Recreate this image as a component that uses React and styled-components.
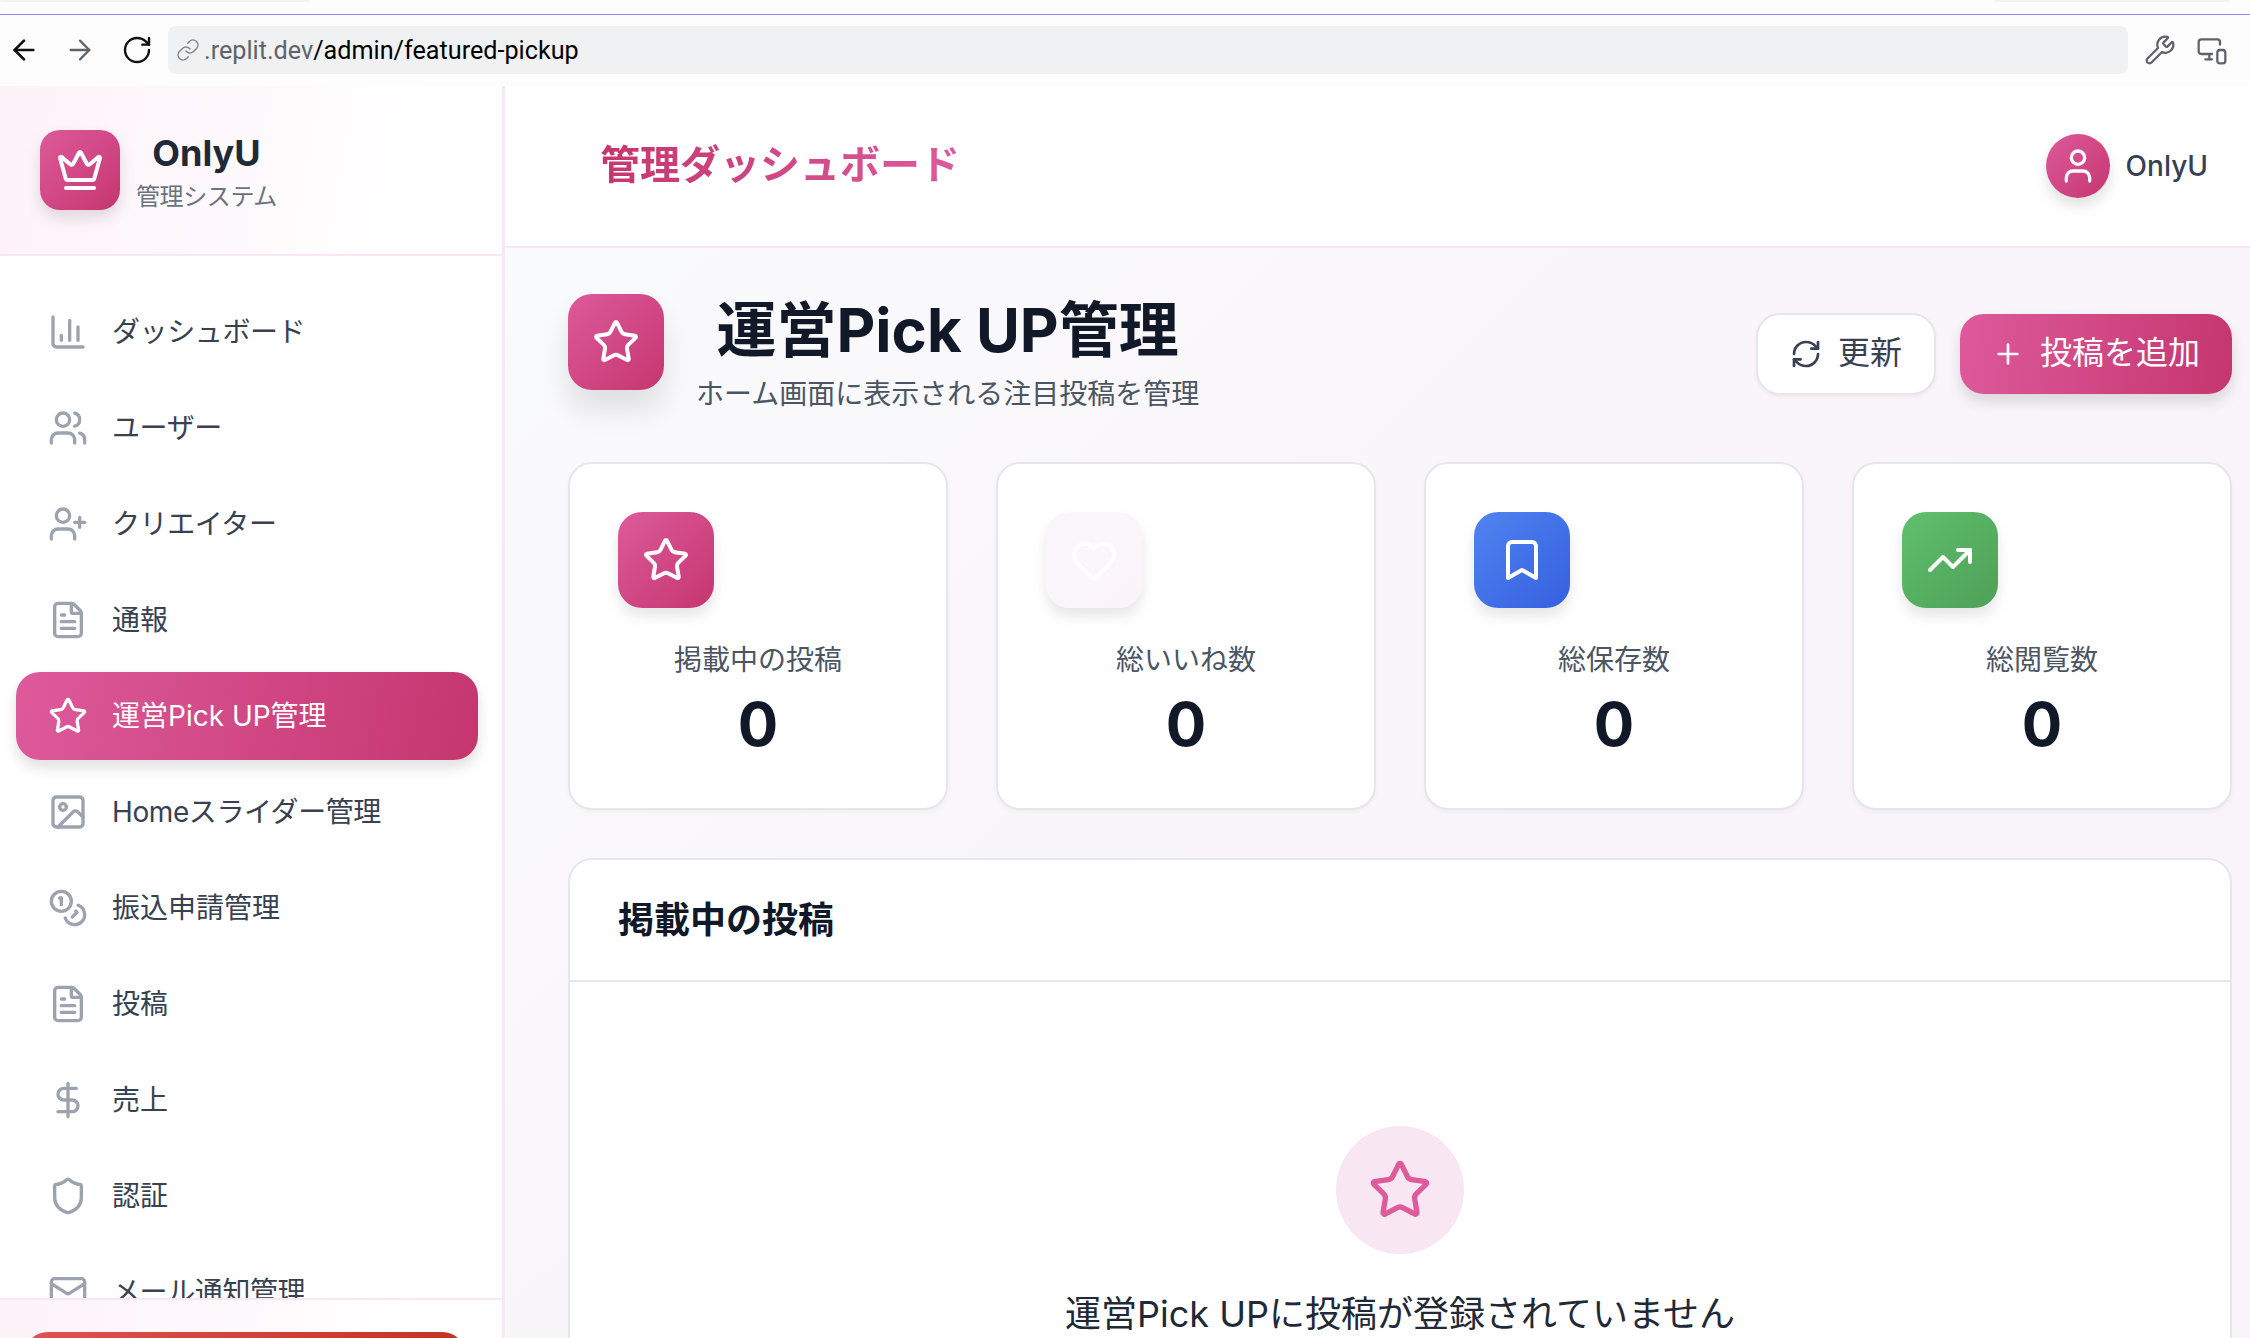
import React from 'react';
import styled, { createGlobalStyle } from 'styled-components';
import {
  ArrowLeft, ArrowRight, RotateCw, Link as LinkIcon, Wrench, MonitorSmartphone, Crown, User,
  ChartColumn, Users, UserPlus, FileText, Star, Image as ImageIcon, Coins, DollarSign, Shield, Mail,
  RefreshCw, Plus, Heart, Bookmark, TrendingUp,
} from 'lucide-react';

const pink = 'linear-gradient(135deg, #dd5a9b 0%, #c5366f 100%)';
const pinkRow = 'linear-gradient(100deg, #dd5a9b 0%, #c5366f 100%)';

const Global = createGlobalStyle`
  html, body { margin: 0; padding: 0; width: 2250px; height: 1338px; overflow: hidden; background: #fff; }
  body { font-family: Inter, "Noto Sans CJK JP", sans-serif; color: #111827; }
  * { box-sizing: border-box; }
`;

const Window = styled.div`
  width: 2250px; height: 1338px; display: flex; flex-direction: column; overflow: hidden;
`;

const Chrome = styled.header`
  height: 86px; flex: none; background: #fdfdfd; display: flex; flex-direction: column;
`;
const TabStrip = styled.div`
  height: 15px; flex: none; display: flex; justify-content: space-between; align-items: flex-start;
  border-bottom: 1px solid #9a85f5; padding-right: 20px;
`;
const TabStub = styled.span`
  height: 2px; width: ${p => p.$w}px; background: #f3f3f4; border-radius: 0 0 3px 3px;
`;
const Toolbar = styled.div`
  flex: 1; display: flex; align-items: center; padding: 0 22px 0 8px; margin-top: -1px;
`;
const NavGlyph = styled.span`
  display: flex; width: 32px; justify-content: center; flex: none;
  margin-right: ${p => p.$mr || 0}px; color: ${p => p.$c || '#111'};
`;
const UrlBar = styled.div`
  flex: 1; height: 48px; margin: 0 16px 0 15px; border-radius: 8px; background: #f0f1f3;
  display: flex; align-items: center; padding-left: 8px; gap: 4px;
  font-family: Roboto, sans-serif; font-size: 25.2px; color: #000;
`;
const UrlText = styled.span` padding-top: 1px; `;
const UrlHost = styled.span` color: #5f6368; `;

const Body = styled.div` flex: 1; min-height: 0; display: flex; `;

const Sidebar = styled.aside`
  width: 505px; flex: none; display: flex; flex-direction: column; background: #fff;
  border-right: 3px solid #f9e8f3; overflow: hidden;
`;
const Brand = styled.div`
  height: 170px; flex: none; display: flex; align-items: center; gap: 16px; padding: 0 0 0 40px;
  background: linear-gradient(100deg, #fdf2f8 0%, #ffffff 85%);
  border-bottom: 2px solid #f9e8f3;
`;
const LogoTile = styled.div`
  width: 80px; height: 80px; border-radius: 20px; background: ${pink}; color: #fff;
  display: flex; align-items: center; justify-content: center;
  box-shadow: 0 8px 16px rgba(0,0,0,.12);
`;
const BrandText = styled.div` text-align: center; padding-top: 2px; `;
const BrandName = styled.div` font-size: 36px; line-height: 48px; font-weight: 700; color: #1f2937; `;
const BrandSub = styled.div`
  font-size: 24px; line-height: 32px; color: #6b7280; margin-top: 4px; letter-spacing: -0.4px;
`;

const Nav = styled.nav`
  flex: 1; min-height: 0; overflow: hidden; padding: 32px 24px 0 16px;
  display: flex; flex-direction: column; gap: 8px;
`;
const NavItem = styled.a`
  height: 88px; flex: none; display: flex; align-items: center; gap: 24px; padding-left: 32px;
  border-radius: 24px; font-size: 28px; line-height: 40px;
  letter-spacing: ${p => (p.$tight ? '-0.4px' : '0')};
  color: ${p => (p.$active ? '#fff' : '#374151')};
  background: ${p => (p.$active ? pinkRow : 'transparent')};
  box-shadow: ${p => (p.$active ? '0 8px 14px rgba(0,0,0,.12)' : 'none')};
  svg { color: ${p => (p.$active ? '#fff' : '#9ca3af')}; flex: none; }
`;
const SideFooter = styled.div`
  height: 40px; flex: none; overflow: hidden; padding: 32px 36px 0 24px;
  background: linear-gradient(100deg, #fdf2f8 0%, #ffffff 85%);
  border-top: 2px solid #f9e8f3;
`;
const DangerButton = styled.div`
  height: 88px; border-radius: 24px; background: linear-gradient(100deg, #e05252 0%, #c5301f 100%);
`;

const Main = styled.main`
  flex: 1; min-width: 0; display: flex; flex-direction: column; overflow: hidden;
`;
const TopBar = styled.div`
  height: 162px; flex: none; background: #fff; border-bottom: 2px solid #f9e8f3;
  display: flex; align-items: center; justify-content: space-between; padding: 0 42px 0 95px;
`;
const TopTitle = styled.div`
  font-size: 40px; line-height: 56px; font-weight: 700; margin-top: -2px;
  background: linear-gradient(90deg, #c5366f, #dd5a9b); -webkit-background-clip: text; background-clip: text; color: transparent;
`;
const UserBox = styled.div` display: flex; align-items: center; gap: 16px; `;
const Avatar = styled.div`
  width: 64px; height: 64px; border-radius: 50%; background: ${pink}; color: #fff;
  display: flex; align-items: center; justify-content: center; box-shadow: 0 8px 14px rgba(0,0,0,.12);
`;
const UserName = styled.span` font-size: 28px; font-weight: 500; color: #374151; `;

const Page = styled.div`
  flex: 1; min-height: 0; overflow: hidden; padding: 46px 18px 0 63px;
  background: linear-gradient(135deg, #f9fafb 0%, #f9f4f9 60%);
`;
const PageHead = styled.div`
  display: flex; align-items: center; justify-content: space-between; margin-bottom: 48px;
`;
const HeadLeft = styled.div` display: flex; align-items: flex-start; gap: 32px; `;
const IconTile = styled.div`
  width: 96px; height: 96px; border-radius: 24px; flex: none; color: #fff;
  background: ${p => p.$bg || pink};
  display: flex; align-items: center; justify-content: center;
  box-shadow: ${p => p.$big ? '0 20px 28px rgba(0,0,0,.1)' : '0 8px 14px rgba(0,0,0,.1)'};
`;
const HeadText = styled.div` text-align: center; `;
const PageTitle = styled.h1`
  margin: 0 0 8px; font-size: 60px; line-height: 72px; font-weight: 700; color: #111827;
`;
const PageSub = styled.p` margin: 0; font-size: 28px; line-height: 40px; color: #4b5563; `;
const HeadActions = styled.div` display: flex; align-items: center; gap: 24px; `;
const OutlineButton = styled.div`
  height: 82px; padding: 0 32px; display: flex; align-items: center; gap: 16px;
  background: #fff; border: 2px solid #e5e7eb; border-radius: 24px;
  font-size: 32px; color: #374151; box-shadow: 0 2px 4px rgba(0,0,0,.05);
`;
const PrimaryButton = styled.div`
  height: 80px; padding: 0 32px; display: flex; align-items: center; gap: 16px;
  background: ${pinkRow}; border-radius: 24px; font-size: 32px; color: #fff;
  box-shadow: 0 8px 14px rgba(0,0,0,.12);
`;
const ButtonLabel = styled.span` line-height: 48px; padding-bottom: 3px; `;

const StatGrid = styled.div`
  display: grid; grid-template-columns: repeat(4, 1fr); gap: 48px; margin-bottom: 48px;
`;
const StatCard = styled.div`
  height: 348px; background: #fff; border: 2px solid #e5e7eb; border-radius: 24px; padding: 48px 48px 0;
  box-shadow: 0 2px 4px rgba(0,0,0,.04);
`;
const StatLabel = styled.div`
  margin-top: 32px; font-size: 28px; line-height: 40px; color: #4b5563; text-align: center;
`;
const StatValue = styled.div`
  margin-top: 8px; font-size: 60px; line-height: 72px; font-weight: 700; color: #111827; text-align: center;
`;

const Panel = styled.section`
  background: #fff; border: 2px solid #e5e7eb; border-radius: 24px; height: 700px;
`;
const PanelHead = styled.div`
  padding: 32px 48px; border-bottom: 2px solid #e5e7eb;
`;
const PanelTitle = styled.h2` margin: 0; font-size: 36px; line-height: 56px; font-weight: 700; color: #111827; `;
const Empty = styled.div`
  padding-top: 144px; display: flex; flex-direction: column; align-items: center; gap: 32px;
`;
const EmptyCircle = styled.div`
  width: 128px; height: 128px; border-radius: 50%; background: #f9e6f3; color: #dd5a9b;
  display: flex; align-items: center; justify-content: center;
`;
const EmptyText = styled.div` font-size: 36px; line-height: 56px; color: #1f2937; `;

const items = [
  [ChartColumn, 'ダッシュボード', false, true], [Users, 'ユーザー', false, true], [UserPlus, 'クリエイター', false, true], [FileText, '通報'],
  [Star, '運営Pick UP管理', true], [ImageIcon, 'Homeスライダー管理', false, true], [Coins, '振込申請管理'],
  [FileText, '投稿'], [DollarSign, '売上'], [Shield, '認証'], [Mail, 'メール通知管理', false, true],
];

const stats = [
  { label: '掲載中の投稿', Icon: Star },
  { label: '総いいね数', Icon: Heart, bg: 'linear-gradient(135deg, #f9f6f9, #fbf5f8)' },
  { label: '総保存数', Icon: Bookmark, bg: 'linear-gradient(135deg, #5083f0, #3560e0)' },
  { label: '総閲覧数', Icon: TrendingUp, bg: 'linear-gradient(135deg, #60c06c, #4ea058)' },
];

export default function App() {
  return (
    <Window>
      <Global />
      <Chrome>
        <TabStrip>
          <TabStub $w={310} />
          <TabStub $w={236} />
        </TabStrip>
        <Toolbar>
          <NavGlyph $mr={24}><ArrowLeft size={32} strokeWidth={2} /></NavGlyph>
          <NavGlyph $mr={25} $c="#5f6368"><ArrowRight size={32} strokeWidth={1.7} /></NavGlyph>
          <NavGlyph><RotateCw size={34} strokeWidth={1.8} /></NavGlyph>
          <UrlBar>
            <LinkIcon size={24} strokeWidth={1.5} color="#80868b" />
            <UrlText><UrlHost>.replit.dev</UrlHost>/admin/featured-pickup</UrlText>
          </UrlBar>
          <NavGlyph $mr={20} $c="#5f6368"><Wrench size={32} strokeWidth={1.7} /></NavGlyph>
          <NavGlyph $c="#5f6368"><MonitorSmartphone size={32} strokeWidth={1.7} /></NavGlyph>
        </Toolbar>
      </Chrome>
      <Body>
        <Sidebar>
          <Brand>
            <LogoTile><Crown size={48} strokeWidth={2} /></LogoTile>
            <BrandText>
              <BrandName>OnlyU</BrandName>
              <BrandSub>管理システム</BrandSub>
            </BrandText>
          </Brand>
          <Nav>
            {items.map(([Icon, label, active, tight]) => (
              <NavItem key={label} $active={active} $tight={tight}>
                <Icon size={40} strokeWidth={2} />
                {label}
              </NavItem>
            ))}
          </Nav>
          <SideFooter><DangerButton /></SideFooter>
        </Sidebar>
        <Main>
          <TopBar>
            <TopTitle>管理ダッシュボード</TopTitle>
            <UserBox>
              <Avatar><User size={40} strokeWidth={2} /></Avatar>
              <UserName>OnlyU</UserName>
            </UserBox>
          </TopBar>
          <Page>
            <PageHead>
              <HeadLeft>
                <IconTile $big><Star size={48} strokeWidth={2} /></IconTile>
                <HeadText>
                  <PageTitle>運営Pick UP管理</PageTitle>
                  <PageSub>ホーム画面に表示される注目投稿を管理</PageSub>
                </HeadText>
              </HeadLeft>
              <HeadActions>
                <OutlineButton><RefreshCw size={32} strokeWidth={2} /><ButtonLabel>更新</ButtonLabel></OutlineButton>
                <PrimaryButton><Plus size={32} strokeWidth={2} /><ButtonLabel>投稿を追加</ButtonLabel></PrimaryButton>
              </HeadActions>
            </PageHead>
            <StatGrid>
              {stats.map(({ label, Icon, bg }) => (
                <StatCard key={label}>
                  <IconTile $bg={bg}><Icon size={48} strokeWidth={2} /></IconTile>
                  <StatLabel>{label}</StatLabel>
                  <StatValue>0</StatValue>
                </StatCard>
              ))}
            </StatGrid>
            <Panel>
              <PanelHead><PanelTitle>掲載中の投稿</PanelTitle></PanelHead>
              <Empty>
                <EmptyCircle><Star size={64} strokeWidth={2} /></EmptyCircle>
                <EmptyText>運営Pick UPに投稿が登録されていません</EmptyText>
              </Empty>
            </Panel>
          </Page>
        </Main>
      </Body>
    </Window>
  );
}
